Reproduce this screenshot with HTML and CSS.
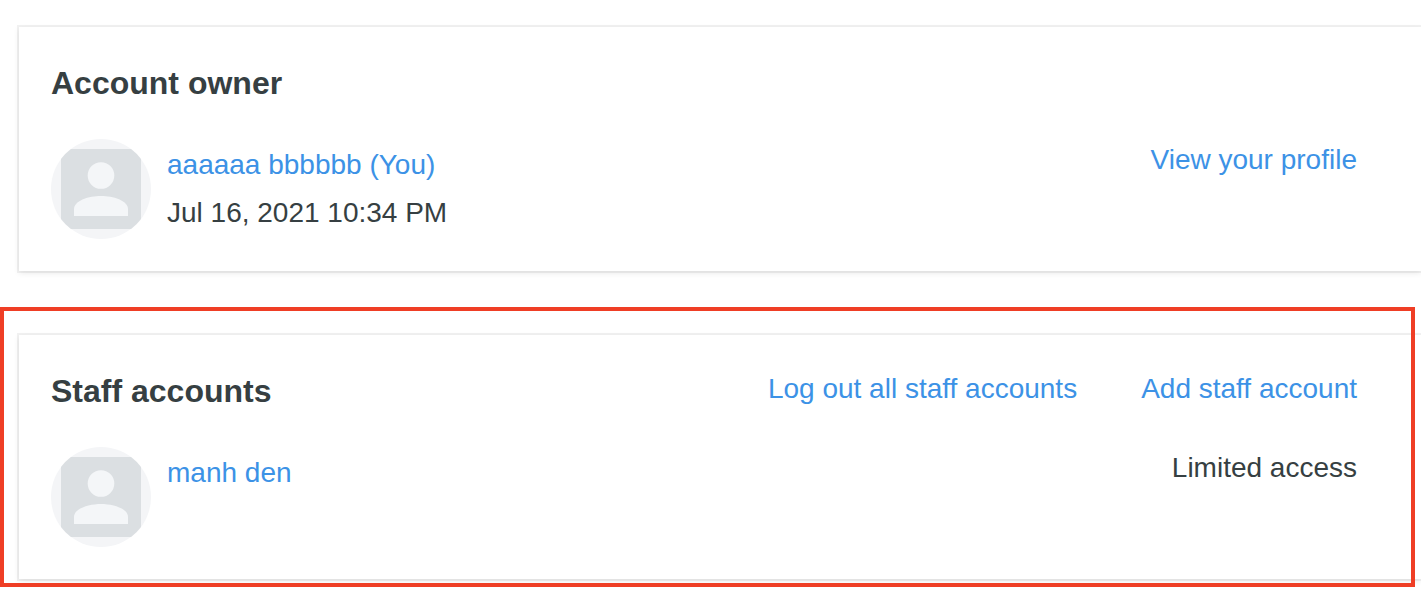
FILE: index.html
```html
<!DOCTYPE html>
<html lang="en">
<head>
<meta charset="utf-8">
<meta name="viewport" content="width=device-width, initial-scale=1">
<title>Accounts</title>
<link rel="stylesheet" href="styles.css">
</head>
<body>
<svg class="sprite" aria-hidden="true">
  <symbol id="person" viewBox="0 0 100 100">
    <circle cx="50" cy="50" r="50" fill="#f4f5f7"/>
    <path d="M20 10H80A50 50 0 0 1 90 20V80A50 50 0 0 1 80 90H20A50 50 0 0 1 10 80V20A50 50 0 0 1 20 10Z" fill="#dbdfe2"/>
    <circle cx="50" cy="36.500" r="13.300" fill="#f4f6f8"/>
    <path d="M23 77V70C23 61.500 38 57 50 57S77 61.500 77 70V77Z" fill="#f4f6f8"/>
  </symbol>
</svg>
<main class="page">
  <section class="card">
    <header class="card-header">
      <h2 class="title">Account owner</h2>
    </header>
    <div class="account">
      <svg class="avatar" aria-hidden="true"><use href="#person"/></svg>
      <div class="details">
        <a class="link" href="#">aaaaaa bbbbbb (You)</a>
        <span>Jul 16, 2021 10:34 PM</span>
      </div>
      <a class="link side" href="#">View your profile</a>
    </div>
  </section>
  <div class="highlight">
    <section class="card">
      <header class="card-header">
        <h2 class="title">Staff accounts</h2>
        <nav class="actions">
          <a class="link" href="#">Log out all staff accounts</a>
          <a class="link" href="#">Add staff account</a>
        </nav>
      </header>
      <div class="account">
        <svg class="avatar" aria-hidden="true"><use href="#person"/></svg>
        <div class="details">
          <a class="link" href="#">manh den</a>
        </div>
        <span class="side">Limited access</span>
      </div>
    </section>
  </div>
</main>
</body>
</html>
```
FILE: styles.css
```css
* {
  box-sizing: border-box;
}

body {
  margin: 0;
  background: #fff;
  color: #363f42;
  font: 28px/48px "Liberation Sans", Arial, sans-serif;
  overflow-x: hidden;
}

.sprite {
  display: none;
}

.page {
  display: flex;
  flex-direction: column;
  gap: 64px;
  padding: 27px 0 19px 19px;
}

.card {
  padding: 32px 64px 32px 32px;
  background: #fff;
  box-shadow: 0 0 0 2px rgba(0, 0, 0, 0.05), 0 2px 6px rgba(0, 0, 0, 0.09);
}

.card-header {
  display: flex;
  justify-content: space-between;
  gap: 32px;
  margin-bottom: 32px;
}

.title {
  margin: 0;
  font-size: 32px;
  font-weight: bold;
}

.actions {
  display: flex;
  gap: 64px;
  line-height: 44px;
}

.link {
  color: #3c92e6;
  text-decoration: none;
}

.account {
  display: flex;
  align-items: flex-start;
  gap: 16px;
}

.avatar {
  flex: none;
  width: 100px;
  height: 100px;
}

.details {
  display: flex;
  flex: 1;
  flex-direction: column;
  align-items: flex-start;
  padding-top: 2px;
}

.side {
  line-height: 42px;
}

.highlight {
  position: relative;
}

/* Outline drawn over the staff card */
.highlight::after {
  content: "";
  position: absolute;
  inset: -28px 6px -8px -19px;
  border: 4px solid #ef3e25;
  pointer-events: none;
}
```
